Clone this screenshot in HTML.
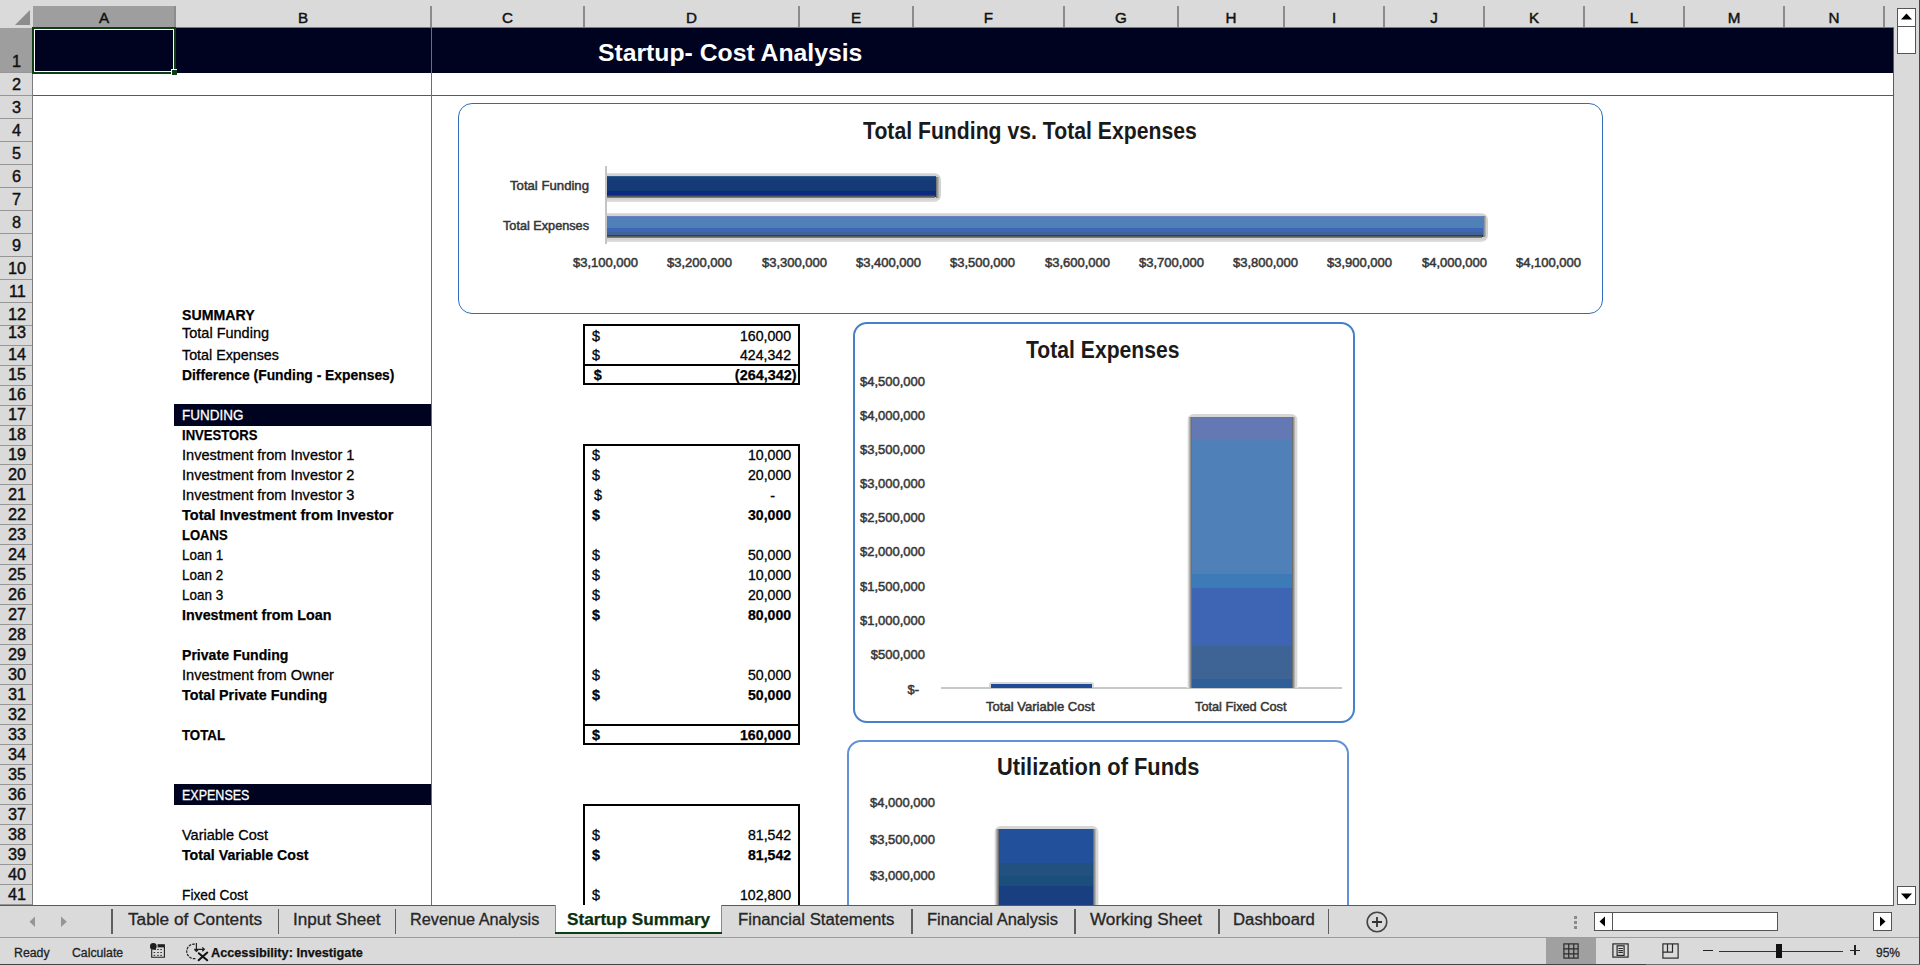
<!DOCTYPE html>
<html><head><meta charset="utf-8"><style>
html,body{margin:0;padding:0;width:1920px;height:965px;overflow:hidden;background:#fff}
body{position:relative;font-family:"Liberation Sans",sans-serif}
.r{position:absolute}
.t{position:absolute;white-space:nowrap;transform-origin:0 0}
</style></head><body>
<div class="r" style="left:0px;top:0px;width:1920px;height:965px;background:#fff"></div>
<div class="r" style="left:0px;top:0px;width:1894px;height:28px;background:#dadada"></div>
<div class="r" style="left:33px;top:6px;width:142px;height:21px;background:#9e9e9e"></div>
<div class="r" style="left:33px;top:27px;width:142px;height:1px;background:#0f3d16"></div>
<div class="r" style="left:175px;top:27px;width:1719px;height:1px;background:#7a7a7a"></div>
<div class="r" style="left:174px;top:6px;width:1.6px;height:21px;background:#8c8c8c"></div>
<div class="r" style="left:430px;top:6px;width:1.6px;height:21px;background:#8c8c8c"></div>
<div class="r" style="left:583px;top:6px;width:1.6px;height:21px;background:#8c8c8c"></div>
<div class="r" style="left:798px;top:6px;width:1.6px;height:21px;background:#8c8c8c"></div>
<div class="r" style="left:912px;top:6px;width:1.6px;height:21px;background:#8c8c8c"></div>
<div class="r" style="left:1063px;top:6px;width:1.6px;height:21px;background:#8c8c8c"></div>
<div class="r" style="left:1177px;top:6px;width:1.6px;height:21px;background:#8c8c8c"></div>
<div class="r" style="left:1283px;top:6px;width:1.6px;height:21px;background:#8c8c8c"></div>
<div class="r" style="left:1383px;top:6px;width:1.6px;height:21px;background:#8c8c8c"></div>
<div class="r" style="left:1483px;top:6px;width:1.6px;height:21px;background:#8c8c8c"></div>
<div class="r" style="left:1583px;top:6px;width:1.6px;height:21px;background:#8c8c8c"></div>
<div class="r" style="left:1683px;top:6px;width:1.6px;height:21px;background:#8c8c8c"></div>
<div class="r" style="left:1783px;top:6px;width:1.6px;height:21px;background:#8c8c8c"></div>
<div class="r" style="left:1883px;top:6px;width:1.6px;height:21px;background:#8c8c8c"></div>
<svg class="r" style="left:14px;top:9px" width="17" height="17"><polygon points="16,1 16,16 1,16" fill="#8c8c8c"/></svg>
<div class="r" style="left:0px;top:28px;width:32px;height:877px;background:#dadada"></div>
<div class="r" style="left:0px;top:28px;width:32px;height:44px;background:#9e9e9e"></div>
<div class="r" style="left:32px;top:28px;width:1px;height:877px;background:#7c7c7c"></div>
<div class="r" style="left:32px;top:28px;width:1px;height:45px;background:#0f3d16"></div>
<div class="r" style="left:0px;top:72px;width:32px;height:1px;background:#969696"></div>
<div class="r" style="left:0px;top:95px;width:32px;height:1px;background:#969696"></div>
<div class="r" style="left:0px;top:118px;width:32px;height:1px;background:#969696"></div>
<div class="r" style="left:0px;top:141px;width:32px;height:1px;background:#969696"></div>
<div class="r" style="left:0px;top:164px;width:32px;height:1px;background:#969696"></div>
<div class="r" style="left:0px;top:187px;width:32px;height:1px;background:#969696"></div>
<div class="r" style="left:0px;top:210px;width:32px;height:1px;background:#969696"></div>
<div class="r" style="left:0px;top:233px;width:32px;height:1px;background:#969696"></div>
<div class="r" style="left:0px;top:256px;width:32px;height:1px;background:#969696"></div>
<div class="r" style="left:0px;top:279px;width:32px;height:1px;background:#969696"></div>
<div class="r" style="left:0px;top:302px;width:32px;height:1px;background:#969696"></div>
<div class="r" style="left:0px;top:325px;width:32px;height:1px;background:#969696"></div>
<div class="r" style="left:0px;top:345px;width:32px;height:1px;background:#969696"></div>
<div class="r" style="left:0px;top:365px;width:32px;height:1px;background:#969696"></div>
<div class="r" style="left:0px;top:385px;width:32px;height:1px;background:#969696"></div>
<div class="r" style="left:0px;top:405px;width:32px;height:1px;background:#969696"></div>
<div class="r" style="left:0px;top:425px;width:32px;height:1px;background:#969696"></div>
<div class="r" style="left:0px;top:445px;width:32px;height:1px;background:#969696"></div>
<div class="r" style="left:0px;top:464px;width:32px;height:1px;background:#969696"></div>
<div class="r" style="left:0px;top:484px;width:32px;height:1px;background:#969696"></div>
<div class="r" style="left:0px;top:504px;width:32px;height:1px;background:#969696"></div>
<div class="r" style="left:0px;top:524px;width:32px;height:1px;background:#969696"></div>
<div class="r" style="left:0px;top:544px;width:32px;height:1px;background:#969696"></div>
<div class="r" style="left:0px;top:564px;width:32px;height:1px;background:#969696"></div>
<div class="r" style="left:0px;top:584px;width:32px;height:1px;background:#969696"></div>
<div class="r" style="left:0px;top:604px;width:32px;height:1px;background:#969696"></div>
<div class="r" style="left:0px;top:624px;width:32px;height:1px;background:#969696"></div>
<div class="r" style="left:0px;top:644px;width:32px;height:1px;background:#969696"></div>
<div class="r" style="left:0px;top:664px;width:32px;height:1px;background:#969696"></div>
<div class="r" style="left:0px;top:684px;width:32px;height:1px;background:#969696"></div>
<div class="r" style="left:0px;top:704px;width:32px;height:1px;background:#969696"></div>
<div class="r" style="left:0px;top:724px;width:32px;height:1px;background:#969696"></div>
<div class="r" style="left:0px;top:744px;width:32px;height:1px;background:#969696"></div>
<div class="r" style="left:0px;top:764px;width:32px;height:1px;background:#969696"></div>
<div class="r" style="left:0px;top:784px;width:32px;height:1px;background:#969696"></div>
<div class="r" style="left:0px;top:804px;width:32px;height:1px;background:#969696"></div>
<div class="r" style="left:0px;top:824px;width:32px;height:1px;background:#969696"></div>
<div class="r" style="left:0px;top:844px;width:32px;height:1px;background:#969696"></div>
<div class="r" style="left:0px;top:864px;width:32px;height:1px;background:#969696"></div>
<div class="r" style="left:0px;top:884px;width:32px;height:1px;background:#969696"></div>
<div class="r" style="left:0px;top:904px;width:32px;height:1px;background:#969696"></div>
<!--ROWNUMS-->
<div class="t" style="left:98.92px;top:10.00px;font-size:15.2px;line-height:15.2px;color:#111;-webkit-text-stroke:0.45px #111;">A</div>
<div class="t" style="left:297.93px;top:10.00px;font-size:15.2px;line-height:15.2px;color:#111;-webkit-text-stroke:0.45px #111;">B</div>
<div class="t" style="left:502.00px;top:10.00px;font-size:15.2px;line-height:15.2px;color:#111;-webkit-text-stroke:0.45px #111;">C</div>
<div class="t" style="left:686.00px;top:10.00px;font-size:15.2px;line-height:15.2px;color:#111;-webkit-text-stroke:0.45px #111;">D</div>
<div class="t" style="left:850.92px;top:10.00px;font-size:15.2px;line-height:15.2px;color:#111;-webkit-text-stroke:0.45px #111;">E</div>
<div class="t" style="left:983.85px;top:10.00px;font-size:15.2px;line-height:15.2px;color:#111;-webkit-text-stroke:0.45px #111;">F</div>
<div class="t" style="left:1115.10px;top:10.00px;font-size:15.2px;line-height:15.2px;color:#111;-webkit-text-stroke:0.45px #111;">G</div>
<div class="t" style="left:1225.50px;top:10.00px;font-size:15.2px;line-height:15.2px;color:#111;-webkit-text-stroke:0.45px #111;">H</div>
<div class="t" style="left:1331.90px;top:10.00px;font-size:15.2px;line-height:15.2px;color:#111;-webkit-text-stroke:0.45px #111;">I</div>
<div class="t" style="left:1430.20px;top:10.00px;font-size:15.2px;line-height:15.2px;color:#111;-webkit-text-stroke:0.45px #111;">J</div>
<div class="t" style="left:1528.92px;top:10.00px;font-size:15.2px;line-height:15.2px;color:#111;-webkit-text-stroke:0.45px #111;">K</div>
<div class="t" style="left:1629.78px;top:10.00px;font-size:15.2px;line-height:15.2px;color:#111;-webkit-text-stroke:0.45px #111;">L</div>
<div class="t" style="left:1727.67px;top:10.00px;font-size:15.2px;line-height:15.2px;color:#111;-webkit-text-stroke:0.45px #111;">M</div>
<div class="t" style="left:1828.50px;top:10.00px;font-size:15.2px;line-height:15.2px;color:#111;-webkit-text-stroke:0.45px #111;">N</div>
<div class="t" style="left:12.47px;top:54.00px;font-size:15.8px;line-height:15.8px;color:#111;transform:scaleX(1.0300);-webkit-text-stroke:0.4px #111;">1</div>
<div class="t" style="left:12.47px;top:77.00px;font-size:15.8px;line-height:15.8px;color:#111;transform:scaleX(1.0300);-webkit-text-stroke:0.4px #111;">2</div>
<div class="t" style="left:12.47px;top:100.00px;font-size:15.8px;line-height:15.8px;color:#111;transform:scaleX(1.0300);-webkit-text-stroke:0.4px #111;">3</div>
<div class="t" style="left:12.47px;top:123.00px;font-size:15.8px;line-height:15.8px;color:#111;transform:scaleX(1.0300);-webkit-text-stroke:0.4px #111;">4</div>
<div class="t" style="left:12.47px;top:146.00px;font-size:15.8px;line-height:15.8px;color:#111;transform:scaleX(1.0300);-webkit-text-stroke:0.4px #111;">5</div>
<div class="t" style="left:12.47px;top:169.00px;font-size:15.8px;line-height:15.8px;color:#111;transform:scaleX(1.0300);-webkit-text-stroke:0.4px #111;">6</div>
<div class="t" style="left:12.47px;top:192.00px;font-size:15.8px;line-height:15.8px;color:#111;transform:scaleX(1.0300);-webkit-text-stroke:0.4px #111;">7</div>
<div class="t" style="left:12.47px;top:215.00px;font-size:15.8px;line-height:15.8px;color:#111;transform:scaleX(1.0300);-webkit-text-stroke:0.4px #111;">8</div>
<div class="t" style="left:12.47px;top:238.00px;font-size:15.8px;line-height:15.8px;color:#111;transform:scaleX(1.0300);-webkit-text-stroke:0.4px #111;">9</div>
<div class="t" style="left:7.94px;top:261.00px;font-size:15.8px;line-height:15.8px;color:#111;transform:scaleX(1.0300);-webkit-text-stroke:0.4px #111;">10</div>
<div class="t" style="left:8.55px;top:284.00px;font-size:15.8px;line-height:15.8px;color:#111;transform:scaleX(1.0300);-webkit-text-stroke:0.4px #111;">11</div>
<div class="t" style="left:7.94px;top:307.00px;font-size:15.8px;line-height:15.8px;color:#111;transform:scaleX(1.0300);-webkit-text-stroke:0.4px #111;">12</div>
<div class="t" style="left:7.94px;top:325.00px;font-size:15.8px;line-height:15.8px;color:#111;transform:scaleX(1.0300);-webkit-text-stroke:0.4px #111;">13</div>
<div class="t" style="left:7.94px;top:347.00px;font-size:15.8px;line-height:15.8px;color:#111;transform:scaleX(1.0300);-webkit-text-stroke:0.4px #111;">14</div>
<div class="t" style="left:7.94px;top:367.00px;font-size:15.8px;line-height:15.8px;color:#111;transform:scaleX(1.0300);-webkit-text-stroke:0.4px #111;">15</div>
<div class="t" style="left:7.94px;top:387.00px;font-size:15.8px;line-height:15.8px;color:#111;transform:scaleX(1.0300);-webkit-text-stroke:0.4px #111;">16</div>
<div class="t" style="left:7.94px;top:407.00px;font-size:15.8px;line-height:15.8px;color:#111;transform:scaleX(1.0300);-webkit-text-stroke:0.4px #111;">17</div>
<div class="t" style="left:7.94px;top:427.00px;font-size:15.8px;line-height:15.8px;color:#111;transform:scaleX(1.0300);-webkit-text-stroke:0.4px #111;">18</div>
<div class="t" style="left:7.94px;top:447.00px;font-size:15.8px;line-height:15.8px;color:#111;transform:scaleX(1.0300);-webkit-text-stroke:0.4px #111;">19</div>
<div class="t" style="left:7.94px;top:467.00px;font-size:15.8px;line-height:15.8px;color:#111;transform:scaleX(1.0300);-webkit-text-stroke:0.4px #111;">20</div>
<div class="t" style="left:7.94px;top:487.00px;font-size:15.8px;line-height:15.8px;color:#111;transform:scaleX(1.0300);-webkit-text-stroke:0.4px #111;">21</div>
<div class="t" style="left:7.94px;top:507.00px;font-size:15.8px;line-height:15.8px;color:#111;transform:scaleX(1.0300);-webkit-text-stroke:0.4px #111;">22</div>
<div class="t" style="left:7.94px;top:527.00px;font-size:15.8px;line-height:15.8px;color:#111;transform:scaleX(1.0300);-webkit-text-stroke:0.4px #111;">23</div>
<div class="t" style="left:7.94px;top:547.00px;font-size:15.8px;line-height:15.8px;color:#111;transform:scaleX(1.0300);-webkit-text-stroke:0.4px #111;">24</div>
<div class="t" style="left:7.94px;top:567.00px;font-size:15.8px;line-height:15.8px;color:#111;transform:scaleX(1.0300);-webkit-text-stroke:0.4px #111;">25</div>
<div class="t" style="left:7.94px;top:587.00px;font-size:15.8px;line-height:15.8px;color:#111;transform:scaleX(1.0300);-webkit-text-stroke:0.4px #111;">26</div>
<div class="t" style="left:7.94px;top:607.00px;font-size:15.8px;line-height:15.8px;color:#111;transform:scaleX(1.0300);-webkit-text-stroke:0.4px #111;">27</div>
<div class="t" style="left:7.94px;top:627.00px;font-size:15.8px;line-height:15.8px;color:#111;transform:scaleX(1.0300);-webkit-text-stroke:0.4px #111;">28</div>
<div class="t" style="left:7.94px;top:647.00px;font-size:15.8px;line-height:15.8px;color:#111;transform:scaleX(1.0300);-webkit-text-stroke:0.4px #111;">29</div>
<div class="t" style="left:7.94px;top:667.00px;font-size:15.8px;line-height:15.8px;color:#111;transform:scaleX(1.0300);-webkit-text-stroke:0.4px #111;">30</div>
<div class="t" style="left:7.94px;top:687.00px;font-size:15.8px;line-height:15.8px;color:#111;transform:scaleX(1.0300);-webkit-text-stroke:0.4px #111;">31</div>
<div class="t" style="left:7.94px;top:707.00px;font-size:15.8px;line-height:15.8px;color:#111;transform:scaleX(1.0300);-webkit-text-stroke:0.4px #111;">32</div>
<div class="t" style="left:7.94px;top:727.00px;font-size:15.8px;line-height:15.8px;color:#111;transform:scaleX(1.0300);-webkit-text-stroke:0.4px #111;">33</div>
<div class="t" style="left:7.94px;top:747.00px;font-size:15.8px;line-height:15.8px;color:#111;transform:scaleX(1.0300);-webkit-text-stroke:0.4px #111;">34</div>
<div class="t" style="left:7.94px;top:767.00px;font-size:15.8px;line-height:15.8px;color:#111;transform:scaleX(1.0300);-webkit-text-stroke:0.4px #111;">35</div>
<div class="t" style="left:7.94px;top:787.00px;font-size:15.8px;line-height:15.8px;color:#111;transform:scaleX(1.0300);-webkit-text-stroke:0.4px #111;">36</div>
<div class="t" style="left:7.94px;top:807.00px;font-size:15.8px;line-height:15.8px;color:#111;transform:scaleX(1.0300);-webkit-text-stroke:0.4px #111;">37</div>
<div class="t" style="left:7.94px;top:827.00px;font-size:15.8px;line-height:15.8px;color:#111;transform:scaleX(1.0300);-webkit-text-stroke:0.4px #111;">38</div>
<div class="t" style="left:7.94px;top:847.00px;font-size:15.8px;line-height:15.8px;color:#111;transform:scaleX(1.0300);-webkit-text-stroke:0.4px #111;">39</div>
<div class="t" style="left:7.94px;top:867.00px;font-size:15.8px;line-height:15.8px;color:#111;transform:scaleX(1.0300);-webkit-text-stroke:0.4px #111;">40</div>
<div class="t" style="left:7.94px;top:887.00px;font-size:15.8px;line-height:15.8px;color:#111;transform:scaleX(1.0300);-webkit-text-stroke:0.4px #111;">41</div>
<div class="r" style="left:33px;top:28px;width:1861px;height:45px;background:#000320"></div>
<div class="r" style="left:33px;top:95px;width:1861px;height:1px;background:#5a5a5a"></div>
<div class="r" style="left:431px;top:28px;width:1px;height:877px;background:#6e6e6e"></div>
<div class="r" style="left:32px;top:27px;width:144px;height:47px;border:2px solid #0f3d16;box-sizing:border-box"></div>
<div class="r" style="left:34px;top:29px;width:140px;height:43px;border:1px solid #fff;box-sizing:border-box"></div>
<div class="r" style="left:171px;top:69px;width:6px;height:6px;background:#0f3d16;border-top:1px solid #fff;border-left:1px solid #fff;box-sizing:border-box"></div>
<div class="t" style="left:598.40px;top:41.00px;font-size:24.5px;line-height:24.5px;font-weight:bold;color:#fff;transform:scaleX(1.0097);">Startup- Cost Analysis</div>
<div class="r" style="left:174px;top:404px;width:257px;height:21.5px;background:#000320"></div>
<div class="r" style="left:174px;top:784px;width:257px;height:21px;background:#000320"></div>
<!--CELLS-->
<div class="t" style="left:182.30px;top:307.00px;font-size:15.5px;line-height:15.5px;font-weight:bold;color:#000;transform:scaleX(0.9132);-webkit-text-stroke:0.25px #000;">SUMMARY</div>
<div class="t" style="left:182.30px;top:325.00px;font-size:15.0px;line-height:15.0px;color:#000;transform:scaleX(0.9661);-webkit-text-stroke:0.3px #000;">Total Funding</div>
<div class="t" style="left:182.30px;top:347.00px;font-size:15.0px;line-height:15.0px;color:#000;transform:scaleX(0.9533);-webkit-text-stroke:0.3px #000;">Total Expenses</div>
<div class="t" style="left:182.30px;top:367.00px;font-size:15.5px;line-height:15.5px;font-weight:bold;color:#000;transform:scaleX(0.8936);-webkit-text-stroke:0.25px #000;">Difference (Funding - Expenses)</div>
<div class="t" style="left:182.30px;top:407.00px;font-size:15.0px;line-height:15.0px;color:#fff;transform:scaleX(0.8983);-webkit-text-stroke:0.3px #fff;">FUNDING</div>
<div class="t" style="left:182.30px;top:427.00px;font-size:15.5px;line-height:15.5px;font-weight:bold;color:#000;transform:scaleX(0.8443);-webkit-text-stroke:0.25px #000;">INVESTORS</div>
<div class="t" style="left:182.30px;top:447.00px;font-size:15.0px;line-height:15.0px;color:#000;transform:scaleX(0.9710);-webkit-text-stroke:0.3px #000;">Investment from Investor 1</div>
<div class="t" style="left:182.30px;top:467.00px;font-size:15.0px;line-height:15.0px;color:#000;transform:scaleX(0.9710);-webkit-text-stroke:0.3px #000;">Investment from Investor 2</div>
<div class="t" style="left:182.30px;top:487.00px;font-size:15.0px;line-height:15.0px;color:#000;transform:scaleX(0.9710);-webkit-text-stroke:0.3px #000;">Investment from Investor 3</div>
<div class="t" style="left:182.30px;top:507.00px;font-size:15.5px;line-height:15.5px;font-weight:bold;color:#000;transform:scaleX(0.9381);-webkit-text-stroke:0.25px #000;">Total Investment from Investor</div>
<div class="t" style="left:182.30px;top:527.00px;font-size:15.5px;line-height:15.5px;font-weight:bold;color:#000;transform:scaleX(0.8415);-webkit-text-stroke:0.25px #000;">LOANS</div>
<div class="t" style="left:182.30px;top:547.00px;font-size:15.0px;line-height:15.0px;color:#000;transform:scaleX(0.8965);-webkit-text-stroke:0.3px #000;">Loan 1</div>
<div class="t" style="left:182.30px;top:567.00px;font-size:15.0px;line-height:15.0px;color:#000;transform:scaleX(0.8965);-webkit-text-stroke:0.3px #000;">Loan 2</div>
<div class="t" style="left:182.30px;top:587.00px;font-size:15.0px;line-height:15.0px;color:#000;transform:scaleX(0.8965);-webkit-text-stroke:0.3px #000;">Loan 3</div>
<div class="t" style="left:182.30px;top:607.00px;font-size:15.5px;line-height:15.5px;font-weight:bold;color:#000;transform:scaleX(0.9228);-webkit-text-stroke:0.25px #000;">Investment from Loan</div>
<div class="t" style="left:182.30px;top:647.00px;font-size:15.5px;line-height:15.5px;font-weight:bold;color:#000;transform:scaleX(0.9086);-webkit-text-stroke:0.25px #000;">Private Funding</div>
<div class="t" style="left:182.30px;top:667.00px;font-size:15.0px;line-height:15.0px;color:#000;transform:scaleX(0.9743);-webkit-text-stroke:0.3px #000;">Investment from Owner</div>
<div class="t" style="left:182.30px;top:687.00px;font-size:15.5px;line-height:15.5px;font-weight:bold;color:#000;transform:scaleX(0.9228);-webkit-text-stroke:0.25px #000;">Total Private Funding</div>
<div class="t" style="left:182.30px;top:727.00px;font-size:15.5px;line-height:15.5px;font-weight:bold;color:#000;transform:scaleX(0.8566);-webkit-text-stroke:0.25px #000;">TOTAL</div>
<div class="t" style="left:182.30px;top:787.00px;font-size:15.0px;line-height:15.0px;color:#fff;transform:scaleX(0.8336);-webkit-text-stroke:0.3px #fff;">EXPENSES</div>
<div class="t" style="left:182.30px;top:827.00px;font-size:15.0px;line-height:15.0px;color:#000;transform:scaleX(0.9668);-webkit-text-stroke:0.3px #000;">Variable Cost</div>
<div class="t" style="left:182.30px;top:847.00px;font-size:15.5px;line-height:15.5px;font-weight:bold;color:#000;transform:scaleX(0.9147);-webkit-text-stroke:0.25px #000;">Total Variable Cost</div>
<div class="t" style="left:182.30px;top:887.00px;font-size:15.0px;line-height:15.0px;color:#000;transform:scaleX(0.9177);-webkit-text-stroke:0.3px #000;">Fixed Cost</div>
<div class="t" style="left:740.39px;top:329.00px;font-size:14.4px;line-height:14.4px;color:#000;transform:scaleX(0.9800);-webkit-text-stroke:0.3px #000;">160,000</div>
<div class="t" style="left:592.00px;top:329.00px;font-size:14.4px;line-height:14.4px;color:#000;-webkit-text-stroke:0.3px #000;">$</div>
<div class="t" style="left:740.39px;top:348.00px;font-size:14.4px;line-height:14.4px;color:#000;transform:scaleX(0.9800);-webkit-text-stroke:0.3px #000;">424,342</div>
<div class="t" style="left:592.00px;top:348.00px;font-size:14.4px;line-height:14.4px;color:#000;-webkit-text-stroke:0.3px #000;">$</div>
<div class="t" style="left:734.85px;top:368.00px;font-size:14.4px;line-height:14.4px;font-weight:bold;color:#000;-webkit-text-stroke:0.25px #000;">(264,342)</div>
<div class="t" style="left:593.80px;top:368.00px;font-size:14.4px;line-height:14.4px;font-weight:bold;color:#000;-webkit-text-stroke:0.25px #000;">$</div>
<div class="t" style="left:748.23px;top:448.00px;font-size:14.4px;line-height:14.4px;color:#000;transform:scaleX(0.9800);-webkit-text-stroke:0.3px #000;">10,000</div>
<div class="t" style="left:592.00px;top:448.00px;font-size:14.4px;line-height:14.4px;color:#000;-webkit-text-stroke:0.3px #000;">$</div>
<div class="t" style="left:748.23px;top:468.00px;font-size:14.4px;line-height:14.4px;color:#000;transform:scaleX(0.9800);-webkit-text-stroke:0.3px #000;">20,000</div>
<div class="t" style="left:592.00px;top:468.00px;font-size:14.4px;line-height:14.4px;color:#000;-webkit-text-stroke:0.3px #000;">$</div>
<div class="t" style="left:770.20px;top:489.00px;font-size:14.4px;line-height:14.4px;color:#000;-webkit-text-stroke:0.3px #000;">-</div>
<div class="t" style="left:594.00px;top:488.00px;font-size:14.4px;line-height:14.4px;color:#000;-webkit-text-stroke:0.3px #000;">$</div>
<div class="t" style="left:748.23px;top:508.00px;font-size:14.4px;line-height:14.4px;font-weight:bold;color:#000;transform:scaleX(0.9800);-webkit-text-stroke:0.25px #000;">30,000</div>
<div class="t" style="left:592.00px;top:508.00px;font-size:14.4px;line-height:14.4px;font-weight:bold;color:#000;-webkit-text-stroke:0.25px #000;">$</div>
<div class="t" style="left:748.23px;top:548.00px;font-size:14.4px;line-height:14.4px;color:#000;transform:scaleX(0.9800);-webkit-text-stroke:0.3px #000;">50,000</div>
<div class="t" style="left:592.00px;top:548.00px;font-size:14.4px;line-height:14.4px;color:#000;-webkit-text-stroke:0.3px #000;">$</div>
<div class="t" style="left:748.23px;top:568.00px;font-size:14.4px;line-height:14.4px;color:#000;transform:scaleX(0.9800);-webkit-text-stroke:0.3px #000;">10,000</div>
<div class="t" style="left:592.00px;top:568.00px;font-size:14.4px;line-height:14.4px;color:#000;-webkit-text-stroke:0.3px #000;">$</div>
<div class="t" style="left:748.23px;top:588.00px;font-size:14.4px;line-height:14.4px;color:#000;transform:scaleX(0.9800);-webkit-text-stroke:0.3px #000;">20,000</div>
<div class="t" style="left:592.00px;top:588.00px;font-size:14.4px;line-height:14.4px;color:#000;-webkit-text-stroke:0.3px #000;">$</div>
<div class="t" style="left:748.23px;top:608.00px;font-size:14.4px;line-height:14.4px;font-weight:bold;color:#000;transform:scaleX(0.9800);-webkit-text-stroke:0.25px #000;">80,000</div>
<div class="t" style="left:592.00px;top:608.00px;font-size:14.4px;line-height:14.4px;font-weight:bold;color:#000;-webkit-text-stroke:0.25px #000;">$</div>
<div class="t" style="left:748.23px;top:668.00px;font-size:14.4px;line-height:14.4px;color:#000;transform:scaleX(0.9800);-webkit-text-stroke:0.3px #000;">50,000</div>
<div class="t" style="left:592.00px;top:668.00px;font-size:14.4px;line-height:14.4px;color:#000;-webkit-text-stroke:0.3px #000;">$</div>
<div class="t" style="left:748.23px;top:688.00px;font-size:14.4px;line-height:14.4px;font-weight:bold;color:#000;transform:scaleX(0.9800);-webkit-text-stroke:0.25px #000;">50,000</div>
<div class="t" style="left:592.00px;top:688.00px;font-size:14.4px;line-height:14.4px;font-weight:bold;color:#000;-webkit-text-stroke:0.25px #000;">$</div>
<div class="t" style="left:740.39px;top:728.00px;font-size:14.4px;line-height:14.4px;font-weight:bold;color:#000;transform:scaleX(0.9800);-webkit-text-stroke:0.25px #000;">160,000</div>
<div class="t" style="left:592.00px;top:728.00px;font-size:14.4px;line-height:14.4px;font-weight:bold;color:#000;-webkit-text-stroke:0.25px #000;">$</div>
<div class="t" style="left:748.23px;top:828.00px;font-size:14.4px;line-height:14.4px;color:#000;transform:scaleX(0.9800);-webkit-text-stroke:0.3px #000;">81,542</div>
<div class="t" style="left:592.00px;top:828.00px;font-size:14.4px;line-height:14.4px;color:#000;-webkit-text-stroke:0.3px #000;">$</div>
<div class="t" style="left:748.23px;top:848.00px;font-size:14.4px;line-height:14.4px;font-weight:bold;color:#000;transform:scaleX(0.9800);-webkit-text-stroke:0.25px #000;">81,542</div>
<div class="t" style="left:592.00px;top:848.00px;font-size:14.4px;line-height:14.4px;font-weight:bold;color:#000;-webkit-text-stroke:0.25px #000;">$</div>
<div class="t" style="left:740.39px;top:888.00px;font-size:14.4px;line-height:14.4px;color:#000;transform:scaleX(0.9800);-webkit-text-stroke:0.3px #000;">102,800</div>
<div class="t" style="left:592.00px;top:888.00px;font-size:14.4px;line-height:14.4px;color:#000;-webkit-text-stroke:0.3px #000;">$</div>
<div class="r" style="left:583px;top:324px;width:217px;height:2px;background:#000"></div>
<div class="r" style="left:583px;top:383px;width:217px;height:2px;background:#000"></div>
<div class="r" style="left:583px;top:324px;width:2px;height:61px;background:#000"></div>
<div class="r" style="left:798px;top:324px;width:2px;height:61px;background:#000"></div>
<div class="r" style="left:583px;top:363.5px;width:217px;height:2px;background:#000"></div>
<div class="r" style="left:583px;top:444px;width:217px;height:2px;background:#000"></div>
<div class="r" style="left:583px;top:743px;width:217px;height:2px;background:#000"></div>
<div class="r" style="left:583px;top:444px;width:2px;height:301px;background:#000"></div>
<div class="r" style="left:798px;top:444px;width:2px;height:301px;background:#000"></div>
<div class="r" style="left:583px;top:724px;width:217px;height:2px;background:#000"></div>
<div class="r" style="left:583px;top:804px;width:217px;height:2px;background:#000"></div>
<div class="r" style="left:583px;top:804px;width:2px;height:101px;background:#000"></div>
<div class="r" style="left:798px;top:804px;width:2px;height:101px;background:#000"></div>
<!--CHARTS-->
<div class="r" style="left:457.8px;top:103px;width:1145.5px;height:210.5px;border:1.5px solid #2f6cbc;border-radius:14px;box-sizing:border-box;background:#fff"></div>
<div class="t" style="left:863.10px;top:120.00px;font-size:23px;line-height:23px;font-weight:bold;color:#1a1a1a;transform:scaleX(0.9218);">Total Funding vs. Total Expenses</div>
<div class="t" style="left:510.40px;top:179.00px;font-size:13px;line-height:13px;color:#363636;transform:scaleX(1.0122);-webkit-text-stroke:0.5px #363636;">Total Funding</div>
<div class="t" style="left:503.40px;top:219.00px;font-size:13px;line-height:13px;color:#363636;transform:scaleX(0.9756);-webkit-text-stroke:0.5px #363636;">Total Expenses</div>
<div class="r" style="left:606px;top:173.0px;width:334.5px;height:29px;background:linear-gradient(#e4e4e4 0,#d2d2d2 1.5px,#d2d2d2 26.5px,#e2e2e2 29px);border-radius:0 7px 7px 0"></div>
<div class="r" style="left:606px;top:175.9px;width:330px;height:21.5px;background:linear-gradient(#2a5a8a 0,#2a5a8a 0.8px,#1a3e7a 0.8px,#1a3e7a 4px,#163a78 4px,#163a78 15px,#0c2a80 15px,#0c2a80 19px,#2e2e2e 19px);"></div>
<div class="r" style="left:606px;top:194.8px;width:329px;height:3px;background:linear-gradient(#2e2e2e,#8a8a8a)"></div>
<div class="r" style="left:936px;top:176.5px;width:2.5px;height:21px;background:linear-gradient(90deg,#6a6a6a,#c0c0c0)"></div>
<div class="r" style="left:606px;top:212.7px;width:881.5px;height:29px;background:linear-gradient(#e4e4e4 0,#d2d2d2 1.5px,#d2d2d2 26.5px,#e2e2e2 29px);border-radius:0 7px 7px 0"></div>
<div class="r" style="left:606px;top:215.6px;width:877px;height:21.5px;background:linear-gradient(#6a80c0 0,#6a80c0 1.4px,#4f80b8 1.4px,#4f80b8 12px,#3d66b9 12px,#3d66b9 16.3px,#3e6496 16.3px,#3e6496 19px,#2e2e2e 19px);"></div>
<div class="r" style="left:606px;top:234.5px;width:876px;height:3px;background:linear-gradient(#2e2e2e,#8a8a8a)"></div>
<div class="r" style="left:1483px;top:216.2px;width:2.5px;height:21px;background:linear-gradient(90deg,#6a6a6a,#c0c0c0)"></div>
<div class="r" style="left:604.5px;top:166px;width:2px;height:78px;background:#c4c4c4"></div>
<div class="t" style="left:573.07px;top:257.00px;font-size:12.5px;line-height:12.5px;color:#363636;transform:scaleX(1.0400);-webkit-text-stroke:0.5px #363636;">$3,100,000</div>
<div class="t" style="left:667.37px;top:257.00px;font-size:12.5px;line-height:12.5px;color:#363636;transform:scaleX(1.0400);-webkit-text-stroke:0.5px #363636;">$3,200,000</div>
<div class="t" style="left:761.67px;top:257.00px;font-size:12.5px;line-height:12.5px;color:#363636;transform:scaleX(1.0400);-webkit-text-stroke:0.5px #363636;">$3,300,000</div>
<div class="t" style="left:855.97px;top:257.00px;font-size:12.5px;line-height:12.5px;color:#363636;transform:scaleX(1.0400);-webkit-text-stroke:0.5px #363636;">$3,400,000</div>
<div class="t" style="left:950.27px;top:257.00px;font-size:12.5px;line-height:12.5px;color:#363636;transform:scaleX(1.0400);-webkit-text-stroke:0.5px #363636;">$3,500,000</div>
<div class="t" style="left:1044.57px;top:257.00px;font-size:12.5px;line-height:12.5px;color:#363636;transform:scaleX(1.0400);-webkit-text-stroke:0.5px #363636;">$3,600,000</div>
<div class="t" style="left:1138.87px;top:257.00px;font-size:12.5px;line-height:12.5px;color:#363636;transform:scaleX(1.0400);-webkit-text-stroke:0.5px #363636;">$3,700,000</div>
<div class="t" style="left:1233.17px;top:257.00px;font-size:12.5px;line-height:12.5px;color:#363636;transform:scaleX(1.0400);-webkit-text-stroke:0.5px #363636;">$3,800,000</div>
<div class="t" style="left:1327.47px;top:257.00px;font-size:12.5px;line-height:12.5px;color:#363636;transform:scaleX(1.0400);-webkit-text-stroke:0.5px #363636;">$3,900,000</div>
<div class="t" style="left:1421.77px;top:257.00px;font-size:12.5px;line-height:12.5px;color:#363636;transform:scaleX(1.0400);-webkit-text-stroke:0.5px #363636;">$4,000,000</div>
<div class="t" style="left:1516.07px;top:257.00px;font-size:12.5px;line-height:12.5px;color:#363636;transform:scaleX(1.0400);-webkit-text-stroke:0.5px #363636;">$4,100,000</div>
<div class="r" style="left:853px;top:321.5px;width:502px;height:401px;border:2px solid #4680c6;border-radius:14px;box-sizing:border-box;background:#fff"></div>
<div class="t" style="left:1026.30px;top:339.00px;font-size:23px;line-height:23px;font-weight:bold;color:#1a1a1a;transform:scaleX(0.9192);">Total Expenses</div>
<div class="t" style="left:859.95px;top:375.00px;font-size:13px;line-height:13px;color:#363636;-webkit-text-stroke:0.5px #363636;">$4,500,000</div>
<div class="t" style="left:859.95px;top:409.00px;font-size:13px;line-height:13px;color:#363636;-webkit-text-stroke:0.5px #363636;">$4,000,000</div>
<div class="t" style="left:859.95px;top:443.00px;font-size:13px;line-height:13px;color:#363636;-webkit-text-stroke:0.5px #363636;">$3,500,000</div>
<div class="t" style="left:859.95px;top:477.00px;font-size:13px;line-height:13px;color:#363636;-webkit-text-stroke:0.5px #363636;">$3,000,000</div>
<div class="t" style="left:859.95px;top:511.00px;font-size:13px;line-height:13px;color:#363636;-webkit-text-stroke:0.5px #363636;">$2,500,000</div>
<div class="t" style="left:859.95px;top:545.00px;font-size:13px;line-height:13px;color:#363636;-webkit-text-stroke:0.5px #363636;">$2,000,000</div>
<div class="t" style="left:859.95px;top:580.00px;font-size:13px;line-height:13px;color:#363636;-webkit-text-stroke:0.5px #363636;">$1,500,000</div>
<div class="t" style="left:859.95px;top:614.00px;font-size:13px;line-height:13px;color:#363636;-webkit-text-stroke:0.5px #363636;">$1,000,000</div>
<div class="t" style="left:870.80px;top:648.00px;font-size:13px;line-height:13px;color:#363636;-webkit-text-stroke:0.5px #363636;">$500,000</div>
<div class="t" style="left:907.45px;top:683.00px;font-size:13px;line-height:13px;color:#363636;-webkit-text-stroke:0.5px #363636;">$-</div>
<div class="r" style="left:941px;top:687px;width:401px;height:2px;background:#c8c8c8"></div>
<div class="r" style="left:989px;top:682px;width:105px;height:5px;background:#d8d8d8;border-radius:3px 3px 0 0"></div>
<div class="r" style="left:991px;top:684px;width:101px;height:3.5px;background:#1e4a96"></div>
<div class="r" style="left:1187.3px;top:414px;width:110.5px;height:274px;background:linear-gradient(90deg,#fff 0,#d6d6d6 1.5px,#d6d6d6 calc(100% - 1.5px),#fff 100%);border-radius:7px 7px 0 0"></div>
<div class="r" style="left:1189.3px;top:417px;width:3px;height:271px;background:linear-gradient(90deg,#c4c4c4,#5e5e5e)"></div>
<div class="r" style="left:1292.3px;top:417px;width:3px;height:271px;background:linear-gradient(90deg,#5e5e5e,#c4c4c4)"></div>
<div class="r" style="left:1192.3px;top:417px;width:100.0px;height:271px;background:linear-gradient(#6478b4 0,#6478b4 22px,#4f80b8 22px,#4f80b8 157px,#3d7bb8 157px,#3d7bb8 171px,#3e64b4 171px,#3e64b4 229px,#3e6496 229px,#3e6496 262px,#2f5f98 262px)"></div>
<div class="t" style="left:985.80px;top:700.00px;font-size:13px;line-height:13px;color:#363636;transform:scaleX(1.0051);-webkit-text-stroke:0.5px #363636;">Total Variable Cost</div>
<div class="t" style="left:1194.70px;top:700.00px;font-size:13px;line-height:13px;color:#363636;transform:scaleX(0.9818);-webkit-text-stroke:0.5px #363636;">Total Fixed Cost</div>
<div class="r" style="left:847px;top:739.5px;width:502px;height:200px;border:2px solid #6291d8;border-radius:14px;box-sizing:border-box;background:#fff"></div>
<div class="t" style="left:996.50px;top:756.00px;font-size:23px;line-height:23px;font-weight:bold;color:#1a1a1a;transform:scaleX(0.9491);">Utilization of Funds</div>
<div class="t" style="left:869.95px;top:796.00px;font-size:13px;line-height:13px;color:#363636;-webkit-text-stroke:0.5px #363636;">$4,000,000</div>
<div class="t" style="left:869.95px;top:833.00px;font-size:13px;line-height:13px;color:#363636;-webkit-text-stroke:0.5px #363636;">$3,500,000</div>
<div class="t" style="left:869.95px;top:869.00px;font-size:13px;line-height:13px;color:#363636;-webkit-text-stroke:0.5px #363636;">$3,000,000</div>
<div class="r" style="left:993.5px;top:826px;width:105.20000000000005px;height:79px;background:linear-gradient(90deg,#fff 0,#d6d6d6 1.5px,#d6d6d6 calc(100% - 1.5px),#fff 100%);border-radius:7px 7px 0 0"></div>
<div class="r" style="left:995.5px;top:829px;width:3px;height:76px;background:linear-gradient(90deg,#c4c4c4,#5e5e5e)"></div>
<div class="r" style="left:1093.2px;top:829px;width:3px;height:76px;background:linear-gradient(90deg,#5e5e5e,#c4c4c4)"></div>
<div class="r" style="left:998.5px;top:829px;width:94.70000000000005px;height:76px;background:linear-gradient(#22509a 0,#22509a 34px,#22507f 34px,#22507f 46.6px,#1a4f7c 46.6px,#1a4f7c 57px,#1a3f80 57px)"></div>
<!--CHROME-->
<div class="r" style="left:1893px;top:28px;width:1px;height:878px;background:#5a5a5a"></div>
<div class="r" style="left:1894px;top:0px;width:26px;height:905px;background:#dadada"></div>
<div class="r" style="left:1897px;top:8px;width:19px;height:19px;background:#fff;border:1px solid #555;box-sizing:border-box"></div>
<svg class="r" style="left:1900px;top:13px" width="13" height="8"><polygon points="6.5,0.5 12,6.5 1,6.5" fill="#000"/></svg>
<div class="r" style="left:1897px;top:26px;width:19px;height:28px;background:#fff;border:1px solid #555;box-sizing:border-box"></div>
<div class="r" style="left:1897px;top:886px;width:19px;height:19px;background:#fff;border:1px solid #555;box-sizing:border-box"></div>
<svg class="r" style="left:1900px;top:893px" width="13" height="8"><polygon points="1,0.5 12,0.5 6.5,6.5" fill="#000"/></svg>
<div class="r" style="left:1919px;top:0px;width:1px;height:965px;background:#444"></div>
<div class="r" style="left:0px;top:905px;width:1919px;height:32px;background:#dadada"></div>
<div class="r" style="left:0px;top:905px;width:1894px;height:1px;background:#5a5a5a"></div>
<div class="r" style="left:0px;top:937px;width:1919px;height:1px;background:#9c9c9c"></div>
<svg class="r" style="left:29px;top:916px" width="8" height="12"><polygon points="6,0.5 6,11 0.5,5.7" fill="#959595"/></svg>
<svg class="r" style="left:60px;top:916px" width="8" height="12"><polygon points="1,0.5 1,11 6.8,5.7" fill="#959595"/></svg>
<div class="r" style="left:111.1px;top:909px;width:1.5px;height:24.5px;background:#5e5e5e"></div>
<div class="r" style="left:277.6px;top:909px;width:1.5px;height:24.5px;background:#5e5e5e"></div>
<div class="r" style="left:394.6px;top:909px;width:1.5px;height:24.5px;background:#5e5e5e"></div>
<div class="r" style="left:911.1px;top:909px;width:1.5px;height:24.5px;background:#5e5e5e"></div>
<div class="r" style="left:1074.1px;top:909px;width:1.5px;height:24.5px;background:#5e5e5e"></div>
<div class="r" style="left:1218.1px;top:909px;width:1.5px;height:24.5px;background:#5e5e5e"></div>
<div class="r" style="left:1327.6px;top:909px;width:1.5px;height:24.5px;background:#5e5e5e"></div>
<div class="r" style="left:555px;top:905px;width:167px;height:28px;background:#fff;border-left:1px solid #8a8a8a;border-right:1px solid #8a8a8a;box-sizing:border-box"></div>
<div class="r" style="left:555px;top:932px;width:167px;height:2px;background:#0f3d16"></div>
<div class="t" style="left:127.60px;top:912.00px;font-size:16px;line-height:16px;color:#262626;transform:scaleX(1.0771);-webkit-text-stroke:0.3px #262626;">Table of Contents</div>
<div class="t" style="left:292.90px;top:912.00px;font-size:16px;line-height:16px;color:#262626;transform:scaleX(1.0678);-webkit-text-stroke:0.3px #262626;">Input Sheet</div>
<div class="t" style="left:410.30px;top:912.00px;font-size:16px;line-height:16px;color:#262626;transform:scaleX(1.0165);-webkit-text-stroke:0.3px #262626;">Revenue Analysis</div>
<div class="t" style="left:737.90px;top:912.00px;font-size:16px;line-height:16px;color:#262626;transform:scaleX(1.0462);-webkit-text-stroke:0.3px #262626;">Financial Statements</div>
<div class="t" style="left:927.30px;top:912.00px;font-size:16px;line-height:16px;color:#262626;transform:scaleX(1.0303);-webkit-text-stroke:0.3px #262626;">Financial Analysis</div>
<div class="t" style="left:1090.00px;top:912.00px;font-size:16px;line-height:16px;color:#262626;transform:scaleX(1.0702);-webkit-text-stroke:0.3px #262626;">Working Sheet</div>
<div class="t" style="left:1232.80px;top:912.00px;font-size:16px;line-height:16px;color:#262626;transform:scaleX(1.0454);-webkit-text-stroke:0.3px #262626;">Dashboard</div>
<div class="t" style="left:566.70px;top:912.00px;font-size:16px;line-height:16px;font-weight:bold;color:#0b3010;transform:scaleX(1.0731);-webkit-text-stroke:0.25px #0b3010;">Startup Summary</div>
<svg class="r" style="left:1365.3px;top:910px" width="24" height="24"><circle cx="12" cy="12" r="9.8" fill="none" stroke="#444" stroke-width="1.6"/><path d="M12 7v10M7 12h10" stroke="#333" stroke-width="1.8"/></svg>
<div class="r" style="left:1573.5px;top:915.5px;width:3px;height:3px;background:#8a8a8a"></div>
<div class="r" style="left:1573.5px;top:920.5px;width:3px;height:3px;background:#8a8a8a"></div>
<div class="r" style="left:1573.5px;top:925.5px;width:3px;height:3px;background:#8a8a8a"></div>
<div class="r" style="left:1594px;top:912px;width:19px;height:19px;background:#fff;border:1px solid #555;box-sizing:border-box"></div>
<svg class="r" style="left:1599px;top:916px" width="8" height="12"><polygon points="6,0.5 6,10.5 0.5,5.5" fill="#000"/></svg>
<div class="r" style="left:1612px;top:912px;width:166px;height:19px;background:#fff;border:1px solid #555;box-sizing:border-box"></div>
<div class="r" style="left:1873px;top:912px;width:19px;height:19px;background:#fff;border:1px solid #555;box-sizing:border-box"></div>
<svg class="r" style="left:1879px;top:916px" width="8" height="12"><polygon points="1,0.5 1,10.5 6.5,5.5" fill="#000"/></svg>
<div class="r" style="left:0px;top:938px;width:1919px;height:26px;background:#dadada"></div>
<div class="r" style="left:0px;top:964px;width:1646px;height:1px;background:#444"></div>
<div class="r" style="left:1646px;top:964px;width:274px;height:1px;background:#6e6e6e"></div>
<div class="t" style="left:14.40px;top:947.00px;font-size:12.5px;line-height:12.5px;color:#222;transform:scaleX(0.9848);-webkit-text-stroke:0.3px #222;">Ready</div>
<div class="t" style="left:71.60px;top:947.00px;font-size:12.5px;line-height:12.5px;color:#222;transform:scaleX(0.9808);-webkit-text-stroke:0.3px #222;">Calculate</div>
<div class="t" style="left:211.00px;top:947.00px;font-size:12.5px;line-height:12.5px;font-weight:bold;color:#111;transform:scaleX(1.0157);-webkit-text-stroke:0.25px #111;">Accessibility: Investigate</div>
<svg class="r" style="left:140px;top:938px" width="80" height="27" viewBox="0 0 80 27">
<g fill="#1e1e1e">
<circle cx="13.3" cy="8.4" r="3.3"/>
<rect x="17.6" y="6.2" width="7.3" height="3.2"/>
<rect x="14.3" y="11.1" width="1.6" height="0.9"/><rect x="17.2" y="11.1" width="1.6" height="0.9"/><rect x="20.3" y="11.1" width="1.6" height="0.9"/>
<rect x="13.6" y="14" width="1.6" height="0.9"/><rect x="17.2" y="14" width="1.6" height="0.9"/><rect x="20.3" y="14" width="1.6" height="0.9"/>
<rect x="13.6" y="16.9" width="1.6" height="0.9"/><rect x="17.2" y="16.9" width="1.6" height="0.9"/><rect x="20.3" y="16.9" width="1.6" height="0.9"/>
</g>
<path d="M11.7 11.3V19.2H24.4V8.5" fill="none" stroke="#1e1e1e" stroke-width="1.1"/>
<path d="M54.8 6.1A7.3 7.3 0 1 0 55.6 20.5" fill="none" stroke="#1e1e1e" stroke-width="1.2" stroke-dasharray="2.6 1.1"/>
<path d="M56.4 5v8.2M54.3 11.3l2.1 2.2 2.1-2.2M54.3 11.3H64.2M62.3 9.4l2.1 1.9-2.1 1.9" fill="none" stroke="#1e1e1e" stroke-width="1.15"/>
<path d="M58.8 15.2L67.2 22.3M58.6 22.2L67.3 14.6" fill="none" stroke="#111" stroke-width="2" stroke-linecap="round"/>
</svg>
<div class="r" style="left:1546px;top:938px;width:50px;height:26px;background:#a0a0a0"></div>
<svg class="r" style="left:1540px;top:938px" width="160" height="27" viewBox="0 0 160 27"><g fill="none" stroke="#2a2a2a" stroke-width="1.2">
<rect x="23.9" y="5.9" width="14.2" height="14.2"/><path d="M28.75 5.9v14.2M33.75 5.9v14.2M23.9 10.8h14.2M23.9 15.8h14.2"/>
<rect x="72.9" y="5.9" width="15.2" height="13.2"/><rect x="77.1" y="7.8" width="7" height="9.6"/><path d="M78.4 10.5h4.5M78.4 12.5h4.5M78.4 14.4h4.5"/>
<rect x="122.9" y="5.9" width="15.2" height="14.2"/><path d="M127.5 5.9v8.3h5v-8.3M122.9 14.2h4.6"/>
</g></svg>
<div class="r" style="left:1703px;top:949.8px;width:10px;height:1.3px;background:#222"></div>
<div class="r" style="left:1719px;top:950.5px;width:124px;height:1px;background:#333"></div>
<div class="r" style="left:1776px;top:944px;width:6px;height:14px;background:#111"></div>
<div class="r" style="left:1850px;top:949.8px;width:10px;height:1.3px;background:#222"></div>
<div class="r" style="left:1854.3px;top:945.3px;width:1.3px;height:10px;background:#222"></div>
<div class="t" style="left:1876.20px;top:947.00px;font-size:12.5px;line-height:12.5px;color:#222;transform:scaleX(0.9600);-webkit-text-stroke:0.3px #222;">95%</div>
</body></html>
